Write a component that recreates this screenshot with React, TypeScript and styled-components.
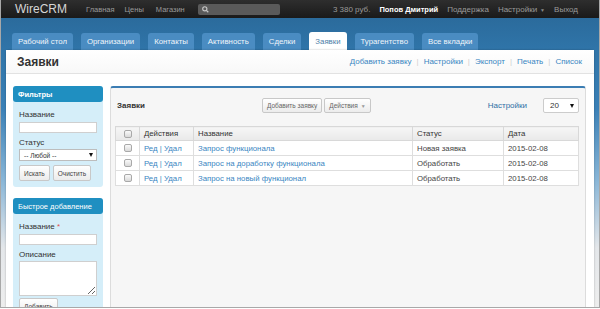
import React from "react";
import styled, { createGlobalStyle } from "styled-components";

const GlobalStyle = createGlobalStyle`
  html, body { margin: 0; padding: 0; background: #fff; }
  body { font-family: "Liberation Sans", Arial, sans-serif; }
  * { box-sizing: border-box; }
`;

const Frame = styled.div`
  width: 600px;
  height: 308px;
  overflow: hidden;
  display: flex;
  flex-direction: column;
  border: 1px solid #a8a8a8;
  border-top: none;
`;

const NavBar = styled.header`
  height: 18px;
  flex: none;
  display: flex;
  align-items: center;
  padding: 0 21px 0 14px;
  background: linear-gradient(#2e2e2e, #1a1a1a);
  font-size: 7.5px;
  color: #9a9a9a;
  white-space: nowrap;
`;

const Brand = styled.span`
  font-size: 12px;
  color: #d6d6d6;
  margin-right: 19px;
`;

const NavLink = styled.span<{ $gap?: number }>`
  margin-right: ${(p) => p.$gap ?? 10}px;
`;

const Search = styled.div`
  width: 82px;
  height: 11px;
  margin-left: 3px;
  background: #5a5a5a;
  border-radius: 2px;
  display: flex;
  align-items: center;
  padding-left: 4px;
`;

const Spacer = styled.div`
  flex: 1;
`;

const NavRight = styled.div`
  display: flex;
  align-items: center;
  gap: 9px;
  font-size: 8px;
`;

const User = styled.span`
  color: #fff;
  font-weight: bold;
  font-size: 7.5px;
`;

const Caret = styled.span`
  font-size: 5px;
  margin-left: 3px;
  color: #888;
`;

const Stage = styled.div`
  flex: 1;
  min-height: 0;
  display: flex;
  flex-direction: column;
  background: linear-gradient(
    to bottom,
    #2b6b9c 0px,
    #2f74a8 30px,
    #3a80b6 90px,
    #86b4d6 160px,
    #e4e7ea 230px,
    #eeeeee 290px
  );
`;

const TabBar = styled.nav`
  flex: none;
  display: flex;
  align-items: flex-end;
  gap: 8px;
  height: 32px;
  padding: 0 0 0 11px;
`;

const Tab = styled.div<{ $active?: boolean }>`
  height: ${(p) => (p.$active ? 18 : 17)}px;
  padding: 0 6px;
  display: flex;
  align-items: center;
  font-size: 7.8px;
  border-radius: 3px 3px 0 0;
  background: ${(p) => (p.$active ? "#fff" : "#4a8cc2")};
  color: ${(p) => (p.$active ? "#4d7ea8" : "#f0f5fa")};
`;

const Card = styled.main`
  flex: 1;
  min-height: 0;
  margin: 0 5px;
  background: #fff;
  border-radius: 3px 3px 0 0;
  box-shadow: 0 0 2px rgba(0, 0, 0, 0.3);
  display: flex;
  flex-direction: column;
`;

const PageHeader = styled.div`
  height: 24px;
  flex: none;
  display: flex;
  align-items: center;
  padding: 0 12px 0 11px;
  border-bottom: 1px solid #e2e2e2;
  background: linear-gradient(#ffffff, #f8f8f8);
`;

const PageTitle = styled.h1`
  margin: 0;
  flex: 1;
  font-size: 12px;
  font-weight: bold;
  color: #333;
`;

const HeaderLinks = styled.div`
  display: flex;
  align-items: center;
  font-size: 8px;
  color: #3a86c2;
`;

const Sep = styled.span`
  color: #cfcfcf;
  margin: 0 5px;
`;

const Body = styled.div`
  flex: 1;
  min-height: 0;
  display: flex;
  gap: 7px;
  padding: 12px 8px 0 7px;
`;

const Sidebar = styled.aside`
  width: 90px;
  flex: none;
  display: flex;
  flex-direction: column;
  gap: 11px;
`;

const Panel = styled.section`
  background: #d5eef9;
  border-radius: 3px;
`;

const PanelHead = styled.div<{ $bold?: boolean }>`
  height: 16px;
  display: flex;
  align-items: center;
  padding-left: 5px;
  background: #1f8fc1;
  color: #fff;
  font-size: 7.5px;
  font-weight: ${(p) => (p.$bold ? "bold" : "normal")};
  border-radius: 3px;
`;

const PanelBody = styled.div`
  padding: 7px 6px 6px;
  display: flex;
  flex-direction: column;
`;

const Label = styled.label`
  height: 12px;
  line-height: 12px;
  font-size: 8px;
  color: #333;
`;

const Req = styled.span`
  color: #e05050;
`;

const TextInput = styled.input`
  display: block;
  width: 100%;
  height: 11px;
  margin: 1px 0 4px;
  padding: 0;
  border: 1px solid #cfcfcf;
  background: #fff;
  outline: none;
`;

const Select = styled.div`
  height: 12px;
  border: 1px solid #bdbdbd;
  background: #fff;
  display: flex;
  align-items: center;
  justify-content: space-between;
  padding: 0 3px 0 4px;
  font-size: 6.5px;
  color: #333;
`;

const Tri = styled.span`
  width: 0;
  height: 0;
  border-left: 2.5px solid transparent;
  border-right: 2.5px solid transparent;
  border-top: 4px solid #111;
`;

const ButtonRow = styled.div<{ $top?: number }>`
  display: flex;
  gap: 3px;
  margin-top: ${(p) => p.$top ?? 4}px;
`;

const Button = styled.button`
  height: 16px;
  padding: 0 4px;
  font-family: inherit;
  font-size: 6.5px;
  color: #444;
  background: linear-gradient(#ffffff, #ececec);
  border: 1px solid #c8c8c8;
  border-radius: 2px;
  display: flex;
  align-items: center;
  gap: 3px;
  white-space: nowrap;
`;

const TextArea = styled.textarea`
  display: block;
  width: 100%;
  height: 35px;
  margin: 0;
  padding: 0;
  border: 1px solid #cfcfcf;
  background: #fff;
  outline: none;
  resize: both;
`;

const MainPanel = styled.section`
  flex: 1;
  min-width: 0;
  background: #f6f6f6;
  border: 1px solid #dcdcdc;
  border-top: 2px solid #3b7db3;
  border-bottom: none;
  border-radius: 3px 3px 0 0;
  padding: 0 6px 0 4px;
  display: flex;
  flex-direction: column;
`;

const Toolbar = styled.div`
  height: 15px;
  margin: 10px 0 13px;
  display: flex;
  align-items: center;
`;

const ToolbarTitle = styled.div`
  width: 147px;
  padding-left: 2px;
  font-size: 8px;
  font-weight: bold;
  color: #333;
`;

const ToolButtons = styled.div`
  display: flex;
  gap: 2px;
`;

const ToolButton = styled(Button)`
  height: 15px;
  font-size: 6.5px;
  color: #666;
`;

const SmallCaret = styled.span`
  font-size: 5px;
  color: #999;
`;

const SettingsLink = styled.span`
  font-size: 8px;
  color: #2f6fa4;
  margin-right: 16px;
`;

const PageSize = styled(Select)`
  width: 36px;
  height: 15px;
  font-size: 8px;
  padding: 0 4px 0 6px;
  border-color: #ccc;
  border-radius: 2px;
`;

const Table = styled.table`
  width: 100%;
  border-collapse: collapse;
  table-layout: fixed;
  background: #fff;
  border: 1px solid #d8d8d8;
  font-size: 7.8px;
  color: #444;
`;

const Th = styled.th`
  height: 14px;
  padding: 0 0 0 4px;
  text-align: left;
  font-weight: normal;
  color: #333;
  background: linear-gradient(#f6f6f6, #e9e9e9);
  border: 1px solid #d8d8d8;
`;

const Td = styled.td`
  height: 15px;
  padding: 0 0 0 4px;
  border: 1px solid #dedede;
  white-space: nowrap;
  overflow: hidden;
`;

const CheckCell = styled(Td)`
  padding: 0;
  text-align: center;
`;

const CheckHead = styled(Th)`
  padding: 0;
  text-align: center;
`;

const Check = styled.span`
  display: inline-block;
  width: 8px;
  height: 8px;
  vertical-align: middle;
  border: 1px solid #a9a9a9;
  border-radius: 2px;
  background: linear-gradient(#fafafa, #d9d9d9);
`;

const Link = styled.span`
  color: #3a86c2;
`;

const rows = [
  { name: "Запрос функционала", status: "Новая заявка", date: "2015-02-08" },
  { name: "Запрос на доработку функционала", status: "Обработать", date: "2015-02-08" },
  { name: "Запрос на новый функционал", status: "Обработать", date: "2015-02-08" },
];

const tabs = [
  "Рабочий стол",
  "Организации",
  "Контакты",
  "Активность",
  "Сделки",
  "Заявки",
  "Турагентство",
  "Все вкладки",
];

export default function App() {
  return (
    <>
      <GlobalStyle />
      <Frame>
        <NavBar>
          <Brand>WireCRM</Brand>
          <NavLink>Главная</NavLink>
          <NavLink $gap={12}>Цены</NavLink>
          <NavLink>Магазин</NavLink>
          <Search>
            <svg width="7" height="7" viewBox="0 0 10 10" fill="none">
              <circle cx="4" cy="4" r="3" stroke="#c8c8c8" strokeWidth="1.6" />
              <line x1="6.2" y1="6.2" x2="9" y2="9" stroke="#c8c8c8" strokeWidth="1.8" />
            </svg>
          </Search>
          <Spacer />
          <NavRight>
            <span>3 380 руб.</span>
            <User>Попов Дмитрий</User>
            <span>Поддержка</span>
            <span>
              Настройки<Caret>▼</Caret>
            </span>
            <span>Выход</span>
          </NavRight>
        </NavBar>
        <Stage>
          <TabBar>
            {tabs.map((t) => (
              <Tab key={t} $active={t === "Заявки"}>
                {t}
              </Tab>
            ))}
          </TabBar>
          <Card>
            <PageHeader>
              <PageTitle>Заявки</PageTitle>
              <HeaderLinks>
                <span>Добавить заявку</span>
                <Sep>|</Sep>
                <span>Настройки</span>
                <Sep>|</Sep>
                <span>Экспорт</span>
                <Sep>|</Sep>
                <span>Печать</span>
                <Sep>|</Sep>
                <span>Список</span>
              </HeaderLinks>
            </PageHeader>
            <Body>
              <Sidebar>
                <Panel>
                  <PanelHead $bold>Фильтры</PanelHead>
                  <PanelBody>
                    <Label>Название</Label>
                    <TextInput readOnly />
                    <Label>Статус</Label>
                    <Select>
                      <span>-- Любой --</span>
                      <Tri />
                    </Select>
                    <ButtonRow>
                      <Button>Искать</Button>
                      <Button>Очистить</Button>
                    </ButtonRow>
                  </PanelBody>
                </Panel>
                <Panel>
                  <PanelHead>Быстрое добавление</PanelHead>
                  <PanelBody>
                    <Label>
                      Название <Req>*</Req>
                    </Label>
                    <TextInput readOnly />
                    <Label>Описание</Label>
                    <TextArea readOnly />
                    <ButtonRow $top={2}>
                      <Button>Добавить</Button>
                    </ButtonRow>
                  </PanelBody>
                </Panel>
              </Sidebar>
              <MainPanel>
                <Toolbar>
                  <ToolbarTitle>Заявки</ToolbarTitle>
                  <ToolButtons>
                    <ToolButton>Добавить заявку</ToolButton>
                    <ToolButton>
                      Действия <SmallCaret>▼</SmallCaret>
                    </ToolButton>
                  </ToolButtons>
                  <Spacer />
                  <SettingsLink>Настройки</SettingsLink>
                  <PageSize>
                    <span>20</span>
                    <Tri />
                  </PageSize>
                </Toolbar>
                <Table>
                  <colgroup>
                    <col style={{ width: 24 }} />
                    <col style={{ width: 54 }} />
                    <col style={{ width: 219 }} />
                    <col style={{ width: 91 }} />
                    <col style={{ width: 75 }} />
                  </colgroup>
                  <thead>
                    <tr>
                      <CheckHead>
                        <Check />
                      </CheckHead>
                      <Th>Действия</Th>
                      <Th>Название</Th>
                      <Th>Статус</Th>
                      <Th>Дата</Th>
                    </tr>
                  </thead>
                  <tbody>
                    {rows.map((r) => (
                      <tr key={r.name}>
                        <CheckCell>
                          <Check />
                        </CheckCell>
                        <Td>
                          <Link>Ред | Удал</Link>
                        </Td>
                        <Td>
                          <Link>{r.name}</Link>
                        </Td>
                        <Td>{r.status}</Td>
                        <Td>{r.date}</Td>
                      </tr>
                    ))}
                  </tbody>
                </Table>
              </MainPanel>
            </Body>
          </Card>
        </Stage>
      </Frame>
    </>
  );
}
